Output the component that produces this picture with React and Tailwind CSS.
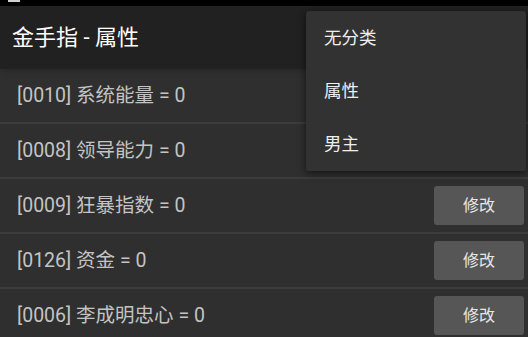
import React from 'react';

const rows = [
  { id: '0010', name: '系统能量', value: 0 },
  { id: '0008', name: '领导能力', value: 0 },
  { id: '0009', name: '狂暴指数', value: 0 },
  { id: '0126', name: '资金', value: 0 },
  { id: '0006', name: '李成明忠心', value: 0 },
];

const menu = ['无分类', '属性', '男主'];

const font = { fontFamily: 'Roboto, "Noto Sans CJK SC", sans-serif' };

export default function App() {
  return (
    <div className="relative w-[528px] h-[337px] overflow-hidden bg-[#2f2f2f]" style={font}>
      {/* status bar */}
      <div className="h-[6px] bg-black relative">
        <div className="absolute left-[8px] top-0 w-[12px] h-[2px] bg-[#cfcfcf]" />
      </div>

      {/* toolbar */}
      <div className="h-[63px] bg-[#212121] flex items-center px-[12px] shadow-md">
        <span className="text-white text-[22px] leading-none">金手指 - 属性</span>
      </div>

      {/* list */}
      <div className="flex flex-col">
        {rows.map((r) => (
          <div key={r.id} className="h-[55px] flex items-center justify-between pl-[17px] pr-[4px] border-b-2 border-[#3c3c3c]">
            <span className="text-[#c4c4c4] text-[19.5px] leading-none">
              [{r.id}] {r.name} = {r.value}
            </span>
            <button className="w-[90px] h-[39px] rounded-[3px] bg-[#565656] text-[#e6e6e6] text-[16px]">
              修改
            </button>
          </div>
        ))}
      </div>

      {/* overflow menu */}
      <div className="absolute left-[306px] top-[11px] w-[220px] h-[160px] rounded-[3px] bg-[#323232] shadow-[0_2px_8px_rgba(0,0,0,0.6)] flex flex-col py-[1px]">
        {menu.map((m) => (
          <div key={m} className="h-[53px] flex items-center pl-[18px] text-[#eeeeee] text-[17.5px]">
            {m}
          </div>
        ))}
      </div>
    </div>
  );
}
